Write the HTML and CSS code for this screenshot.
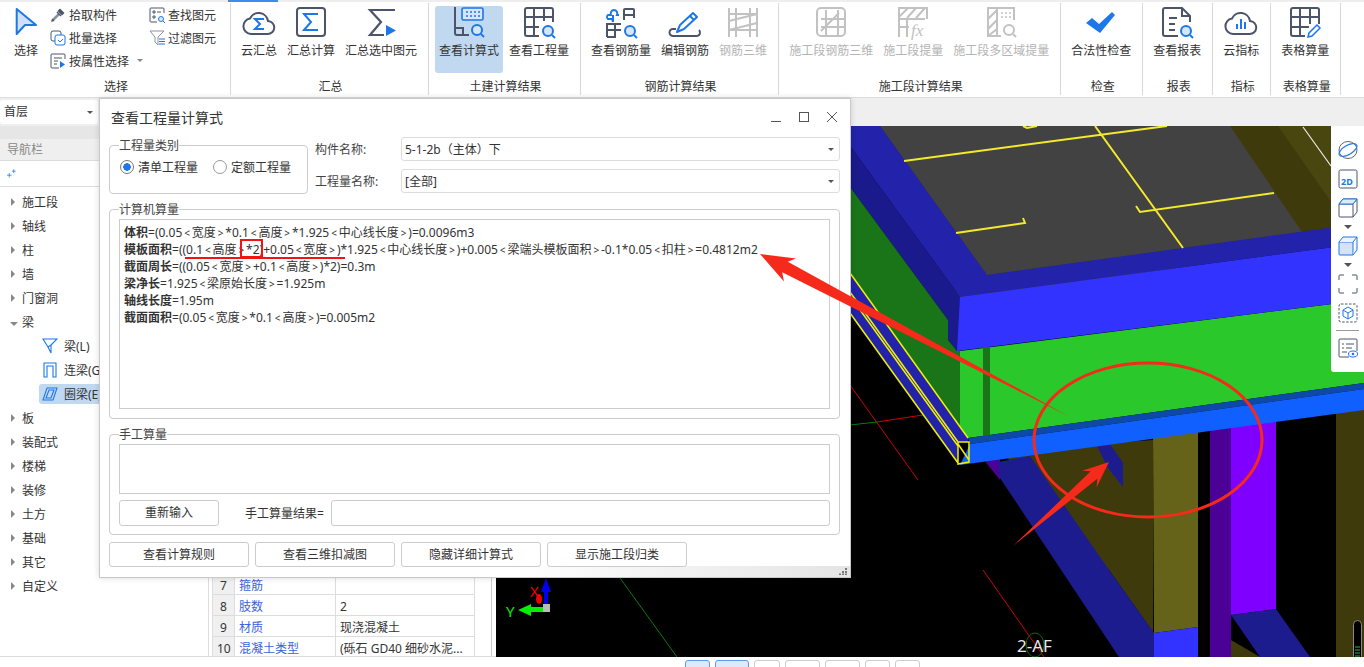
FILE: index.html
```html
<!DOCTYPE html>
<html lang="zh-CN">
<head>
    <meta charset="UTF-8">
    <title>查看工程量计算式</title>
    <link rel="stylesheet" href="styles.css">
</head>
<body>
    <div class="tabline"><span class="tabmark"></span></div>
    <header class="ribbon">
        <section class="group group-select">
            <div class="items">
                <div class="btn btn-narrow">
                    <svg class="ico" viewBox="0 0 32 32"><path d="M6.7 2 26 18H15L6.7 27Z" fill="#cfe0f8" stroke="#1d77e8" stroke-width="2" stroke-linejoin="round"/></svg>
                    <span>选择</span>
                </div>
                <div class="tools">
                    <div class="tool">
                        <svg class="sm" viewBox="0 0 16 16"><path d="M2 14 9 7" stroke="#8a92a0" stroke-width="2.500"/><path d="M1 15 2.500 11.500 4.500 13.500Z" fill="#4b5468"/><path d="M7 5l4 4" stroke="#4b5468" stroke-width="1.500"/><path d="M10 1.500l4.500 4.500-2.500 2.500L7.500 4Z" fill="#4b5468"/></svg>
                        <span>拾取构件</span>
                    </div>
                    <div class="tool">
                        <svg class="sm" viewBox="0 0 16 16"><rect x="1" y="1" width="10" height="10" rx="2" fill="none" stroke="#4b5468"/><rect x="5" y="5" width="10" height="10" rx="2" fill="#fff" stroke="#1d77e8"/><path d="M8 10l2 2 3-3" fill="none" stroke="#1d77e8"/></svg>
                        <span>批量选择</span>
                    </div>
                    <div class="tool tool-more">
                        <svg class="sm" viewBox="0 0 16 16"><path d="M15 6V2a1 1 0 0 0-1-1H2a1 1 0 0 0-1 1v12a1 1 0 0 0 1 1h7M4 5h8M4 8h4M4 11h3" fill="none" stroke="#4b5468"/><path d="M10 8v7l5-3.500Z" fill="#1d77e8"/></svg>
                        <span>按属性选择</span>
                        <i class="caret"></i>
                    </div>
                    <div class="tool tool-second">
                        <svg class="sm" viewBox="0 0 16 16"><path d="M15 6V2a1 1 0 0 0-1-1H2a1 1 0 0 0-1 1v12a1 1 0 0 0 1 1h6" fill="none" stroke="#4b5468"/><path d="M4 4h2v2H4ZM8 5h4M4 9h2v2H4Z" fill="none" stroke="#4b5468"/><circle cx="12" cy="12" r="2.500" fill="#dceafb" stroke="#1d77e8"/><path d="m14 14 2 2" stroke="#1d77e8"/></svg>
                        <span>查找图元</span>
                    </div>
                    <div class="tool tool-second">
                        <svg class="sm" viewBox="0 0 16 16"><path d="M1 1h14L9 7v8L6 12V7Z" fill="none" stroke="#8a92a0"/><path d="M10 9h6M10 11.500h6M10 14h6" stroke="#1d77e8"/></svg>
                        <span>过滤图元</span>
                    </div>
                </div>
            </div>
            <div class="group-name">选择</div>
        </section>

        <section class="group">
            <div class="items">
                <div class="btn">
                    <svg class="ico" viewBox="0 0 32 32"><path d="M8 27h16.500a6.500 6.500 0 0 0 .5-13 9.500 9.500 0 0 0-18-2.500A7.800 7.800 0 0 0 8 27Z" fill="none" stroke="#4b5468" stroke-width="2"/><path d="M21 12h-9l5 5-5 5h9" fill="none" stroke="#1d77e8" stroke-width="2"/></svg>
                    <span>云汇总</span>
                </div>
                <div class="btn">
                    <svg class="ico" viewBox="0 0 32 32"><rect x="2" y="1" width="28" height="28" rx="3" fill="none" stroke="#4b5468" stroke-width="2"/><path d="M23 7H9l7 8-7 8h14" fill="none" stroke="#1d77e8" stroke-width="2"/></svg>
                    <span>汇总计算</span>
                </div>
                <div class="btn">
                    <svg class="ico" viewBox="0 0 32 32"><path d="M30 3H5l11 12L5 28h14" fill="none" stroke="#4b5468" stroke-width="2.200"/><path d="M21 18v11l10-5.500Z" fill="#1d77e8"/></svg>
                    <span>汇总选中图元</span>
                </div>
            </div>
            <div class="group-name">汇总</div>
        </section>

        <section class="group">
            <div class="items">
                <div class="btn active">
                    <svg class="ico" viewBox="0 0 32 32"><path d="M2 0v26a2 2 0 0 0 2 2h12M2 21h8v7" fill="none" stroke="#4b5468" stroke-width="2"/><rect x="9" y="1" width="21" height="12" rx="1.500" fill="#d6e6fa" stroke="#1d77e8" stroke-width="1.600"/><path d="M13 5h2M17 5h2M21 5h2M25 5h2M13 9h2M17 9h2M21 9h2M25 9h2" stroke="#1d77e8" stroke-width="1.500"/><circle cx="24" cy="23" r="5" fill="#d6e6fa" stroke="#1d77e8" stroke-width="2"/><path d="m28 27 3 3" stroke="#1d77e8" stroke-width="2"/></svg>
                    <span>查看计算式</span>
                </div>
                <div class="btn">
                    <svg class="ico" viewBox="0 0 32 32"><path d="M16 29H4a2 2 0 0 1-2-2V3a2 2 0 0 1 2-2h24a2 2 0 0 1 2 2v12M2 10h28M2 20h14M11 1v28M21 1v13" fill="none" stroke="#4b5468" stroke-width="2"/><circle cx="25" cy="24" r="5" fill="#d6e6fa" stroke="#1d77e8" stroke-width="2"/><path d="m29 28 3 3" stroke="#1d77e8" stroke-width="2"/></svg>
                    <span>查看工程量</span>
                </div>
            </div>
            <div class="group-name">土建计算结果</div>
        </section>

        <section class="group">
            <div class="items">
                <div class="btn">
                    <svg class="ico" viewBox="0 0 32 32"><path d="M9 3a3.500 3.500 0 0 0-3 5H3a2.500 2.500 0 0 0 0 4h4l1 3M9 3a3.500 3.500 0 0 1 3 5h2M8 8v7" fill="none" stroke="#1d77e8" stroke-width="2"/><path d="M19 13V3a1 1 0 0 1 1-1h8a1 1 0 0 1 1 1v8M19 8h10M2 30V17h14M2 23h14M10 17v13H2" fill="none" stroke="#4b5468" stroke-width="2"/><circle cx="25" cy="24" r="5" fill="#d6e6fa" stroke="#1d77e8" stroke-width="2"/><path d="m29 28 3 3" stroke="#1d77e8" stroke-width="2"/></svg>
                    <span>查看钢筋量</span>
                </div>
                <div class="btn">
                    <svg class="ico" viewBox="0 0 32 32"><path d="M8 25 11 18 24 6l4 4-13 12Z" fill="#fff" stroke="#1d77e8" stroke-width="2" stroke-linejoin="round"/><path d="m21 9 4 4" stroke="#1d77e8" stroke-width="2"/><path d="M7 22H4a3.500 3.500 0 0 0 0 7h24a3.500 3.500 0 0 0 2-6" fill="none" stroke="#4b5468" stroke-width="2"/></svg>
                    <span>编辑钢筋</span>
                </div>
                <div class="btn off">
                    <svg class="ico" viewBox="0 0 32 32"><path d="M2 1v29M9 1v29M23 1v29M30 1v29M2 7h28M2 23h28M2 14l28-7M2 23l28-7" fill="none" stroke="#c2c2c2" stroke-width="2"/></svg>
                    <span>钢筋三维</span>
                </div>
            </div>
            <div class="group-name">钢筋计算结果</div>
        </section>

        <section class="group">
            <div class="items">
                <div class="btn off">
                    <svg class="ico" viewBox="0 0 32 32"><rect x="2" y="1" width="28" height="28" rx="4" fill="none" stroke="#c2c2c2" stroke-width="2"/><path d="M11 3v25M23 3v25M6 12h24M6 20h24M6 24l18-18" fill="none" stroke="#c2c2c2" stroke-width="2"/></svg>
                    <span>施工段钢筋三维</span>
                </div>
                <div class="btn off">
                    <svg class="ico" viewBox="0 0 32 32"><path d="M2 30V1h28v11M2 12h26M2 20h10M10 12v18M2 10l9-9M10 11l9-10M19 11l9-10" fill="none" stroke="#c2c2c2" stroke-width="2"/><text class="ico-fx" x="14" y="29">fx</text></svg>
                    <span>施工段提量</span>
                </div>
                <div class="btn off">
                    <svg class="ico" viewBox="0 0 32 32"><path d="M16 29H3V1h26v12M12 1v28M3 12l9-9M3 22l9-9M3 29l9-7" fill="none" stroke="#c2c2c2" stroke-width="2"/><path d="M16 6h2M20 6h2M24 6h2M16 10h2M20 10h2M24 10h2" stroke="#c2c2c2" stroke-width="1.500"/><circle cx="24" cy="23" r="5" fill="none" stroke="#c2c2c2" stroke-width="2"/><path d="m28 27 3 3" stroke="#c2c2c2" stroke-width="2"/></svg>
                    <span>施工段多区域提量</span>
                </div>
            </div>
            <div class="group-name">施工段计算结果</div>
        </section>

        <section class="group">
            <div class="items">
                <div class="btn">
                    <svg class="ico" viewBox="0 0 32 32"><path d="M1 16 7 11l7 6L27 5l3 3-15 18Z" fill="#1d77e8"/></svg>
                    <span>合法性检查</span>
                </div>
            </div>
            <div class="group-name">检查</div>
        </section>

        <section class="group">
            <div class="items">
                <div class="btn">
                    <svg class="ico" viewBox="0 0 32 32"><path d="M17 29H4a2 2 0 0 1-2-2V3a2 2 0 0 1 2-2h17l8 8v6M21 1v8h8M8 11h8M8 17h6M8 23h6" fill="none" stroke="#4b5468" stroke-width="2"/><circle cx="25" cy="24" r="5" fill="#d6e6fa" stroke="#1d77e8" stroke-width="2"/><path d="m29 28 3 3" stroke="#1d77e8" stroke-width="2"/></svg>
                    <span>查看报表</span>
                </div>
            </div>
            <div class="group-name">报表</div>
        </section>

        <section class="group">
            <div class="items">
                <div class="btn">
                    <svg class="ico" viewBox="0 0 32 32"><path d="M8 27h16.500a6.500 6.500 0 0 0 .5-13 9.500 9.500 0 0 0-18-2.500A7.800 7.800 0 0 0 8 27Z" fill="none" stroke="#4b5468" stroke-width="2"/><path d="M12 17v5M16 12v10M20 15v7" stroke="#1d77e8" stroke-width="2"/></svg>
                    <span>云指标</span>
                </div>
            </div>
            <div class="group-name">指标</div>
        </section>

        <section class="group">
            <div class="items">
                <div class="btn">
                    <svg class="ico" viewBox="0 0 32 32"><path d="M16 29H4a2 2 0 0 1-2-2V3a2 2 0 0 1 2-2h24a2 2 0 0 1 2 2v14M2 10h28M2 20h18M11 1v28M21 1v16" fill="none" stroke="#4b5468" stroke-width="2"/><path d="m19 30 1-4 8-8 3 3-8 8Z" fill="#fff" stroke="#1d77e8" stroke-width="1.500"/></svg>
                    <span>表格算量</span>
                </div>
            </div>
            <div class="group-name">表格算量</div>
        </section>
    </header>

    <div class="subbar">
        <div class="floor">首层<i class="caret caret-dark"></i></div>
    </div>

    <main class="main">
        <aside class="side">
            <nav class="nav">
                <div class="nav-top"></div>
                <div class="nav-title">导航栏</div>
                <div class="nav-tools">
                    <svg class="nav-plus" viewBox="0 0 12 12"><path d="M3 6v6M0 9h6M9 1v5M6.500 3.500h5" stroke="#1d77e8"/></svg>
                </div>
                <ul class="tree">
                    <li><i class="arrow"></i>施工段</li>
                    <li><i class="arrow"></i>轴线</li>
                    <li><i class="arrow"></i>柱</li>
                    <li><i class="arrow"></i>墙</li>
                    <li><i class="arrow"></i>门窗洞</li>
                    <li><i class="arrow arrow-open"></i>梁</li>
                    <li class="sub">
                        <svg class="sub-ico" viewBox="0 0 16 16"><path d="M1 1h14L9 7v8L6 9Z M9 7 6 9" fill="none" stroke="#1d77e8" stroke-width="1.100"/></svg>梁(L)
                    </li>
                    <li class="sub">
                        <svg class="sub-ico" viewBox="0 0 16 16"><path d="M2 15V1h12v14h-3V4H5v11Z" fill="none" stroke="#1d77e8" stroke-width="1.100"/></svg>连梁(G)
                    </li>
                    <li class="sub sub-on">
                        <svg class="sub-ico" viewBox="0 0 16 16"><path d="M5 2h10l-4 12H1ZM7 4h5l-3 8H4Z" fill="none" stroke="#1d77e8" stroke-width="1.100"/></svg>圈梁(E)
                    </li>
                    <li><i class="arrow"></i>板</li>
                    <li><i class="arrow"></i>装配式</li>
                    <li><i class="arrow"></i>楼梯</li>
                    <li><i class="arrow"></i>装修</li>
                    <li><i class="arrow"></i>土方</li>
                    <li><i class="arrow"></i>基础</li>
                    <li><i class="arrow"></i>其它</li>
                    <li><i class="arrow"></i>自定义</li>
                </ul>
            </nav>
            <div class="props">
                <table class="prop-table">
                    <tr><td class="num">7</td><td class="name">箍筋</td><td class="val"></td></tr>
                    <tr><td class="num">8</td><td class="name">肢数</td><td class="val">2</td></tr>
                    <tr><td class="num">9</td><td class="name">材质</td><td class="val">现浇混凝土</td></tr>
                    <tr><td class="num">10</td><td class="name">混凝土类型</td><td class="val">(砾石 GD40 细砂水泥...</td></tr>
                </table>
            </div>
        </aside>

        <div class="canvas">
            <svg class="scene" viewBox="496 126 868 531">
                <rect x="496" y="126" width="868" height="531" fill="#000"/>
                <path d="M620 578 677 657" stroke="#0b7a0b"/>
                <path d="M983 570 1044 657M850 385 918 480M877 422 923 415" stroke="#d10000"/>
                <path d="M850 425 877 422" stroke="#0b7a0b"/>

                <!-- columns under the beam -->
                <path d="M1336 400H1364V657H1336Z" fill="#3f3a0c"/>
                <path d="M980 455 1000 455V480Z" fill="#4b0096"/>
                <path d="M1000 450 1153 440V632L1109 570Z" fill="#3f3a0c"/>
                <path d="M1153 430H1198V627L1154 633Z" fill="#65631a"/>
                <path d="M1154 633 1198 627V657H1154Z" fill="#3333ff"/>
                <path d="M1210 420H1231V657H1210Z" fill="#4b0096"/>
                <path d="M1231 420H1276V609L1231 615Z" fill="#8000ff"/>
                <path d="M1231 640 1260 657H1231Z" fill="#3f3a0c"/>
                <path d="M1231 615 1276 609 1310 657H1260Z" fill="#1c1c8e"/>
                <path d="M998 462 1030 456 1109 570 1154 633V657H1119L1000 478Z" fill="#1c1c8e"/>
                <path d="M1097 446 1110 444 1123 463V487L1108 468Z" fill="#1c1c8e"/>

                <!-- slab and beams -->
                <path d="M880 126H1364V240L960 300Z" fill="#3f3a0c"/>
                <path d="M1278 126H1364V226H1348Z" fill="#4a4610"/>
                <path d="M880 126H1230L1302 232 987 275Z" fill="#424242"/>
                <path d="M850 126H880L987 275 1364 223V243L960 297 850 146Z" fill="#2222aa"/>
                <path d="M850 146 955 290 960 297V351H957L948 340V320L850 187Z" fill="#1a1a8c"/>
                <path d="M850 187 948 320V340L957 351 960 351V440L968 438 850 273Z" fill="#1a7518"/>
                <path d="M960 351 1364 300V383L968 438 960 430Z" fill="#2ac82a"/>
                <path d="M983 347H990V437H983Z" fill="#1a7518"/>
                <path d="M960 297 1364 243V300L957 351Z" fill="#3333ff"/>
                <path d="M968 438 1364 383V389L970 444Z" fill="#0d4aa8"/>
                <path d="M970 444 1364 389V410L960 465Z" fill="#1060ff"/>

                <!-- yellow rebar -->
                <g fill="none" stroke="#f2ea2a" stroke-width="2">
                    <path d="M904 161 1167 126M1095 126 1183 248M1136 206 1140 212 1274 193M956 233 1025 223 1023 218M1023 126 1027 128 1037 126"/>
                </g>
                <path d="M850 273 968 438V442L958 442 850 292Z" fill="#2222aa"/>
                <path d="M850 292 958 442V463L850 313Z" fill="#2222aa"/>
                <g fill="none" stroke="#f0f000" stroke-width="1.500">
                    <path d="M850 273 968 438M850 292 958 442M850 296 958 446M850 313 958 463M958 442H969V462L958 464ZM958 444 969 460"/>
                </g>
                <path d="M1303 127 1331 166" stroke="#eee" stroke-width="1.200"/>

                <!-- axis marker -->
                <path d="M546 578 551 592H548V604H544V592H541Z" fill="#0000f0"/>
                <ellipse cx="539" cy="599" rx="3" ry="5" fill="#f00000"/>
                <path d="M518 610 531 604V607H546V612H531V616Z" fill="#00f000"/>
                <rect x="543" y="604" width="7" height="8" fill="#bbb"/>
                <text class="axis axis-x" x="530" y="597">X</text>
                <text class="axis axis-y" x="506" y="617">Y</text>

                <ellipse cx="1035" cy="645" rx="9" ry="12" fill="none" stroke="#0b6a0b"/>
                <text class="grid-label" x="1017" y="652">2-AF</text>

                <rect x="1353.500" y="620.500" width="8" height="40" rx="4" fill="#000" stroke="#888"/>
                <path d="M1355 647h5M1355 650h5M1355 653h5M1355 656h5" stroke="#2bb84a"/>
            </svg>

            <div class="viewbar">
                <svg class="vico" viewBox="0 0 20 20"><ellipse cx="10" cy="10" rx="9" ry="8.500" fill="none" stroke="#666"/><ellipse cx="10" cy="10" rx="10" ry="4.500" transform="rotate(-30 10 10)" fill="none" stroke="#1d77e8" stroke-width="1.200"/></svg>
                <svg class="vico" viewBox="0 0 20 20"><rect x="1" y="1" width="18" height="18" rx="1.500" fill="none" stroke="#4b5468"/><text class="vico-2d" x="3" y="16">2D</text></svg>
                <svg class="vico" viewBox="0 0 20 20"><path d="M1 6h14v13H2a1 1 0 0 1-1-1ZM1 6l4-5h14l-4 5M15 19l4-5V1" fill="none" stroke="#4b5468"/><path d="M1 6l4-5h14l-4 5Z" fill="#dceafb" stroke="#1d77e8"/></svg>
                <i class="vdrop"></i>
                <svg class="vico" viewBox="0 0 20 20"><path d="M1 6h14v13H2a1 1 0 0 1-1-1Z" fill="#d2e3fa" stroke="#1d77e8"/><path d="M1 6l4-5h14l-4 5M15 19l4-5V1" fill="#eef4fd" stroke="#1d77e8"/></svg>
                <i class="vdrop"></i>
                <svg class="vico" viewBox="0 0 20 20"><path d="M1 6V2a1 1 0 0 1 1-1h4M14 1h4a1 1 0 0 1 1 1v4M19 14v4a1 1 0 0 1-1 1h-4M6 19H2a1 1 0 0 1-1-1v-4" fill="none" stroke="#4b5468"/></svg>
                <svg class="vico" viewBox="0 0 20 20"><rect x="1" y="1" width="18" height="18" rx="2" fill="none" stroke="#4b5468" stroke-dasharray="2.500 1.500"/><path d="m10 4 5 3v6l-5 3-5-3V7Zm-5 3 5 3 5-3m-5 3v6" fill="none" stroke="#1d77e8"/></svg>
                <hr class="vline">
                <svg class="vico" viewBox="0 0 20 20"><path d="M11 19H2a1 1 0 0 1-1-1V2a1 1 0 0 1 1-1h16a1 1 0 0 1 1 1v11M4 6h2M8 6h8M4 10h2M8 10h6M4 14h5" fill="none" stroke="#4b5468"/><ellipse cx="15" cy="16" rx="4.500" ry="3" fill="#fff" stroke="#1d77e8"/><circle cx="15" cy="16" r="1.300" fill="#1d77e8"/></svg>
            </div>
        </div>
    </main>

    <footer class="statusbar">
        <span class="sb sb-on sb-a"></span>
        <span class="sb sb-on sb-b"></span>
        <span class="sb sb-c"></span>
        <span class="sb sb-d"></span>
        <span class="sb sb-d"></span>
        <span class="sb sb-a"></span>
        <span class="sb sb-a"></span>
    </footer>

    <div class="dialog">
        <div class="dlg-title">
            <span>查看工程量计算式</span>
            <div class="dlg-ctrls">
                <svg viewBox="0 0 12 12"><path d="M1 10.500h10" stroke="#555"/></svg>
                <svg viewBox="0 0 12 12"><rect x="1.500" y="1.500" width="9" height="9" fill="none" stroke="#555"/></svg>
                <svg viewBox="0 0 12 12"><path d="m1 1 10 10M11 1 1 11" stroke="#555"/></svg>
            </div>
        </div>
        <div class="dlg-body">
            <div class="dlg-top">
                <fieldset class="box box-kind">
                    <legend>工程量类别</legend>
                    <label class="radio radio-on"><i></i>清单工程量</label>
                    <label class="radio"><i></i>定额工程量</label>
                </fieldset>
                <div class="pick">
                    <div class="pick-row">
                        <span class="pick-label">构件名称:</span>
                        <div class="select">5-1-2b（主体）下<i class="caret caret-dark"></i></div>
                    </div>
                    <div class="pick-row">
                        <span class="pick-label">工程量名称:</span>
                        <div class="select">[全部]<i class="caret caret-dark"></i></div>
                    </div>
                </div>
            </div>

            <fieldset class="box box-calc">
                <legend>计算机算量</legend>
                <div class="formula">
                    <p><b>体积</b>=(0.05<i>&lt;</i>宽度<i>&gt;</i>*0.1<i>&lt;</i>高度<i>&gt;</i>*1.925<i>&lt;</i>中心线长度<i>&gt;</i>)=0.0096m3</p>
                    <p><b>模板面积</b>=((0.1<i>&lt;</i>高度<i>&gt;</i>*2)+0.05<i>&lt;</i>宽度<i>&gt;</i>)*1.925<i>&lt;</i>中心线长度<i>&gt;</i>)+0.005<i>&lt;</i>梁端头模板面积<i>&gt;</i>-0.1*0.05<i>&lt;</i>扣柱<i>&gt;</i>=0.4812m2</p>
                    <p><b>截面周长</b>=((0.05<i>&lt;</i>宽度<i>&gt;</i>+0.1<i>&lt;</i>高度<i>&gt;</i>)*2)=0.3m</p>
                    <p><b>梁净长</b>=1.925<i>&lt;</i>梁原始长度<i>&gt;</i>=1.925m</p>
                    <p><b>轴线长度</b>=1.95m</p>
                    <p><b>截面面积</b>=(0.05<i>&lt;</i>宽度<i>&gt;</i>*0.1<i>&lt;</i>高度<i>&gt;</i>)=0.005m2</p>
                </div>
            </fieldset>

            <fieldset class="box box-hand">
                <legend>手工算量</legend>
                <div class="hand-area"></div>
                <div class="hand-row">
                    <div class="push push-reset">重新输入</div>
                    <span class="hand-label">手工算量结果=</span>
                    <div class="hand-input"></div>
                </div>
            </fieldset>

            <div class="dlg-actions">
                <div class="push">查看计算规则</div>
                <div class="push">查看三维扣减图</div>
                <div class="push">隐藏详细计算式</div>
                <div class="push">显示施工段归类</div>
            </div>
        </div>
        <svg class="grip" viewBox="0 0 9 7"><path d="M6 0h2v2H6ZM3 3h2v2H3ZM6 3h2v2H6ZM0 5.500h2v1.500H0ZM3 5.500h2v1.500H3ZM6 5.500h2v1.500H6Z" fill="#777"/></svg>
    </div>

    <!-- red marks drawn on top of the screenshot -->
    <svg class="marks" viewBox="0 0 1364 667">
        <path d="M185 258H345" stroke="#f01414" stroke-width="2"/>
        <rect x="241" y="240" width="21" height="17" fill="none" stroke="#f01414" stroke-width="2"/>
        <ellipse cx="1148" cy="440" rx="114" ry="77" fill="none" stroke="#f52a1a" stroke-width="3"/>
        <path d="M1068 416 787.800 261.700 796 258.500 760 254 784 281.500 782.200 272.300Z" fill="#f52a1a"/>
        <path d="M1013 546 1090.700 471.200 1082.200 470.700 1109 462 1096.600 487.300 1097.300 478.800Z" fill="#f52a1a"/>
    </svg>
</body>
</html>
```

FILE: styles.css
```css
* {
    box-sizing: border-box;
}
html, body {
    margin: 0;
    height: 667px;
    overflow: hidden;
}
body {
    position: relative;
    font-family: "Noto Sans", "Noto Sans CJK SC", sans-serif;
    font-size: 12px;
    color: #333;
    background-color: white;
}
i {
    font-style: normal;
}

/* ribbon */
.tabline {
    height: 2px;
    background-color: #eee;
}
.tabmark {
    display: block;
    width: 50px;
    height: 2px;
    margin-left: 228px;
    background-color: #3f8ce8;
}
.ribbon {
    display: flex;
    height: 96px;
    padding: 1px 0 2px;
    border-bottom: 1px solid #ddd;
    background-color: white;
}
.group {
    display: flex;
    flex-direction: column;
    border-right: 1px solid #d8d8d8;
}
.group-select {
    width: 231px;
}
.items {
    flex: 1;
    display: flex;
    gap: 10px;
    padding: 3px 11px 0 10px;
}
.group-select .items {
    gap: 12px;
    padding-left: 14px;
}
.group-name {
    height: 16px;
    padding-left: 2px;
    line-height: 16px;
    text-align: center;
}
.btn {
    display: flex;
    flex-direction: column;
    align-items: center;
    height: 67px;
    padding-top: 1px;
    line-height: 16px;
    white-space: nowrap;
}
.btn span {
    margin-top: 4px;
}
.btn-narrow {
    width: 24px;
}
.btn.active {
    margin: 0 -4px;
    padding: 1px 4px 0;
    border-radius: 3px;
    background-color: #c0d8f0;
}
.btn.off {
    color: #b4b4b4;
}
.ico {
    display: block;
    flex: none;
    width: 32px;
    height: 32px;
    overflow: visible;
}
.ico-fx {
    font-family: "Liberation Serif", serif;
    font-style: italic;
    font-size: 17px;
    fill: #c2c2c2;
}
.tools {
    display: grid;
    grid-template-rows: repeat(3, 23px);
    grid-auto-flow: column;
    grid-template-columns: 86px 80px;
    column-gap: 13px;
    align-self: flex-start;
    margin-top: -3px;
}
.tool {
    display: flex;
    align-items: center;
    gap: 3px;
    white-space: nowrap;
}
.sm {
    flex: none;
    width: 16px;
    height: 16px;
}
.tool-second {
    grid-column: 2;
}
.tool-more {
    grid-row: 3;
}
.caret {
    display: inline-block;
    width: 0;
    height: 0;
    margin-left: 5px;
    border: 3px solid transparent;
    border-top: 3px solid #888;
    border-bottom: 0;
}
.caret-dark {
    position: absolute;
    top: 50%;
    right: 5px;
    margin: -1px 0 0;
    border-top-color: #555;
}

/* bar under the ribbon */
.subbar {
    height: 28px;
    padding-top: 2px;
    background-color: #efefef;
}
.floor {
    position: relative;
    width: 98px;
    height: 24px;
    padding-left: 4px;
    line-height: 24px;
    border-radius: 3px;
    background-color: white;
}

.main {
    display: flex;
    height: 531px;
}
.side {
    display: flex;
    flex: none;
    width: 496px;
    border-bottom: 1px solid #ddd;
    background-color: white;
}

/* navigation tree */
.nav {
    flex: none;
    width: 209px;
    border-right: 1px solid #ddd;
}
.nav-top {
    height: 13px;
    background-color: #e6e6e6;
}
.nav-title {
    height: 22px;
    padding-left: 7px;
    line-height: 22px;
    color: #888;
    background-color: #efefef;
    border-bottom: 1px solid #ddd;
}
.nav-tools {
    height: 26px;
    padding: 7px 0 0 7px;
    border-bottom: 1px solid #ddd;
}
.nav-plus {
    display: block;
    width: 9px;
    height: 10px;
}
.tree {
    list-style: none;
    margin: 3px 0 0;
    padding: 0;
}
.tree li {
    display: flex;
    align-items: center;
    height: 24px;
    padding-left: 11px;
}
.arrow {
    flex: none;
    width: 0;
    height: 0;
    margin-right: 7px;
    border: 4px solid transparent;
    border-left: 4px solid #888;
    border-right: 0;
}
.arrow-open {
    margin: 3px 4px 0 -1px;
    border: 4px solid transparent;
    border-top: 4px solid #888;
    border-bottom: 0;
}
.tree .sub {
    padding-left: 42px;
}
.sub-ico {
    flex: none;
    width: 16px;
    height: 16px;
    margin-right: 6px;
}
.tree .sub-on {
    height: 20px;
    margin: 2px 0 2px 39px;
    padding-left: 3px;
    border-radius: 3px 0 0 3px;
    background-color: #c0d8f0;
}

/* property table */
.props {
    display: flex;
    flex-direction: column;
    justify-content: flex-end;
    flex: none;
    width: 283px;
    padding: 0 16px 0 3px;
    overflow: hidden;
    border-right: 1px solid #ccc;
}
.prop-table {
    flex: none;
    width: 263px;
    margin-bottom: -2px;
    table-layout: fixed;
    border-collapse: collapse;
}
.prop-table td {
    height: 21px;
    padding: 3px 4px 0;
    line-height: 17px;
    border: 1px solid #ddd;
    white-space: nowrap;
    overflow: hidden;
}
.num {
    width: 22px;
    text-align: center;
    background-color: #f0f0f0;
}
.name {
    width: 101px;
    color: #3a62d8;
}

/* 3d view */
.canvas {
    position: relative;
    flex: 1;
    background-color: black;
}
.scene {
    display: block;
    width: 868px;
    height: 531px;
}
.axis {
    font-size: 15px;
}
.axis-x {
    fill: #f00000;
}
.axis-y {
    fill: #00f000;
}
.grid-label {
    font-size: 17px;
    fill: #e8e8e8;
}
.viewbar {
    position: absolute;
    top: 0;
    right: 0;
    display: flex;
    flex-direction: column;
    align-items: center;
    width: 33px;
    height: 246px;
    padding-top: 14px;
    border-radius: 0 0 0 3px;
    background-color: white;
}
.vico {
    display: block;
    flex: none;
    width: 20px;
    height: 20px;
    margin-bottom: 9px;
}
.vico-2d {
    font-size: 9px;
    font-weight: 700;
    fill: #1d77e8;
}
.vdrop {
    flex: none;
    width: 0;
    height: 0;
    margin: -2px 0 7px;
    border: 4px solid transparent;
    border-top: 4px solid #555;
    border-bottom: 0;
}
.vline {
    width: 23px;
    margin: -2px 0 7px;
    border: 0;
    border-top: 1px solid #999;
}

/* bottom strip */
.statusbar {
    display: flex;
    gap: 5px;
    height: 10px;
    padding: 3px 0 0 685px;
    overflow: hidden;
    background-color: white;
}
.sb {
    flex: none;
    height: 20px;
    border: 1px solid #ccc;
    border-radius: 3px;
}
.sb-on {
    border-color: #5b9be8;
    background-color: #dceafb;
}
.sb-a {
    width: 25px;
}
.sb-b {
    width: 34px;
}
.sb-c {
    width: 26px;
}
.sb-d {
    width: 35px;
}

/* dialog */
.dialog {
    position: absolute;
    left: 99px;
    top: 98px;
    width: 752px;
    height: 480px;
    border: 1px solid #c8c8c8;
    background: linear-gradient(to right, white 55%, #e4e4e4) no-repeat bottom / 100% 11px, white;
    box-shadow: 0 0 6px rgba(0,0,0,0.15);
}
.dlg-title {
    display: flex;
    align-items: center;
    justify-content: space-between;
    height: 38px;
    padding: 0 12px 2px 11px;
    font-size: 14px;
}
.dlg-ctrls {
    display: flex;
    gap: 16px;
}
.dlg-ctrls svg {
    display: block;
    width: 12px;
    height: 12px;
}
.dlg-body {
    padding: 0 10px 0 9px;
}
.dlg-top {
    display: flex;
    gap: 7px;
}
.box {
    margin: 0;
    padding: 0 9px 9px;
    min-width: 0;
    border: 1px solid #ccc;
    border-radius: 4px;
}
.box legend {
    padding: 0;
    line-height: 17px;
    color: #444;
}
.box-kind {
    display: flex;
    gap: 15px;
    flex: none;
    width: 199px;
    height: 57px;
    padding: 3px 0 0 10px;
}
.box-kind legend {
    margin-left: -1px;
}
.radio {
    display: flex;
    align-items: center;
    gap: 4px;
    height: 20px;
    white-space: nowrap;
}
.radio i {
    flex: none;
    width: 14px;
    height: 14px;
    border: 1px solid #999;
    border-radius: 50%;
    background-color: white;
}
.radio-on i {
    border-color: #777;
    background: radial-gradient(circle, #1d77e8 3.5px, white 4px);
}
.pick {
    flex: 1;
    display: flex;
    flex-direction: column;
    gap: 8px;
}
.pick-row {
    display: flex;
    align-items: center;
    height: 24px;
}
.pick-label {
    flex: none;
    width: 86px;
    color: #444;
}
.select {
    position: relative;
    flex: 1;
    height: 24px;
    padding-left: 3px;
    line-height: 23px;
    border: 1px solid #ddd;
    border-radius: 3px;
    background-color: white;
}
.box-calc {
    margin-top: 7px;
}
.formula {
    height: 190px;
    margin-top: 1px;
    padding: 4px;
    border: 1px solid #ccc;
    background-color: white;
}
.formula p {
    height: 17px;
    margin: 0;
    line-height: 17px;
    white-space: nowrap;
}
.formula b {
    font-weight: 700;
}
.formula i {
    padding: 0 1.9px;
    font-size: 10px;
}
.box-hand {
    margin-top: 7px;
    height: 109px;
}
.hand-area {
    height: 50px;
    margin-top: 1px;
    border: 1px solid #ccc;
    background-color: white;
}
.hand-row {
    display: flex;
    align-items: center;
    margin-top: 6px;
}
.push {
    width: 140px;
    height: 25px;
    line-height: 24px;
    text-align: center;
    border: 1px solid #ccc;
    border-radius: 3px;
    background-color: white;
}
.push-reset {
    flex: none;
    width: 100px;
    height: 26px;
}
.hand-label {
    flex: none;
    width: 86px;
    margin-left: 26px;
}
.hand-input {
    flex: 1;
    height: 26px;
    border: 1px solid #ccc;
    border-radius: 3px;
    background-color: white;
}
.dlg-actions {
    display: flex;
    gap: 6px;
    margin-top: 7px;
}
.grip {
    position: absolute;
    right: 2px;
    bottom: 2px;
    width: 9px;
    height: 7px;
}

/* annotations */
.marks {
    position: absolute;
    left: 0;
    top: 0;
    width: 1364px;
    height: 667px;
    pointer-events: none;
}
```
